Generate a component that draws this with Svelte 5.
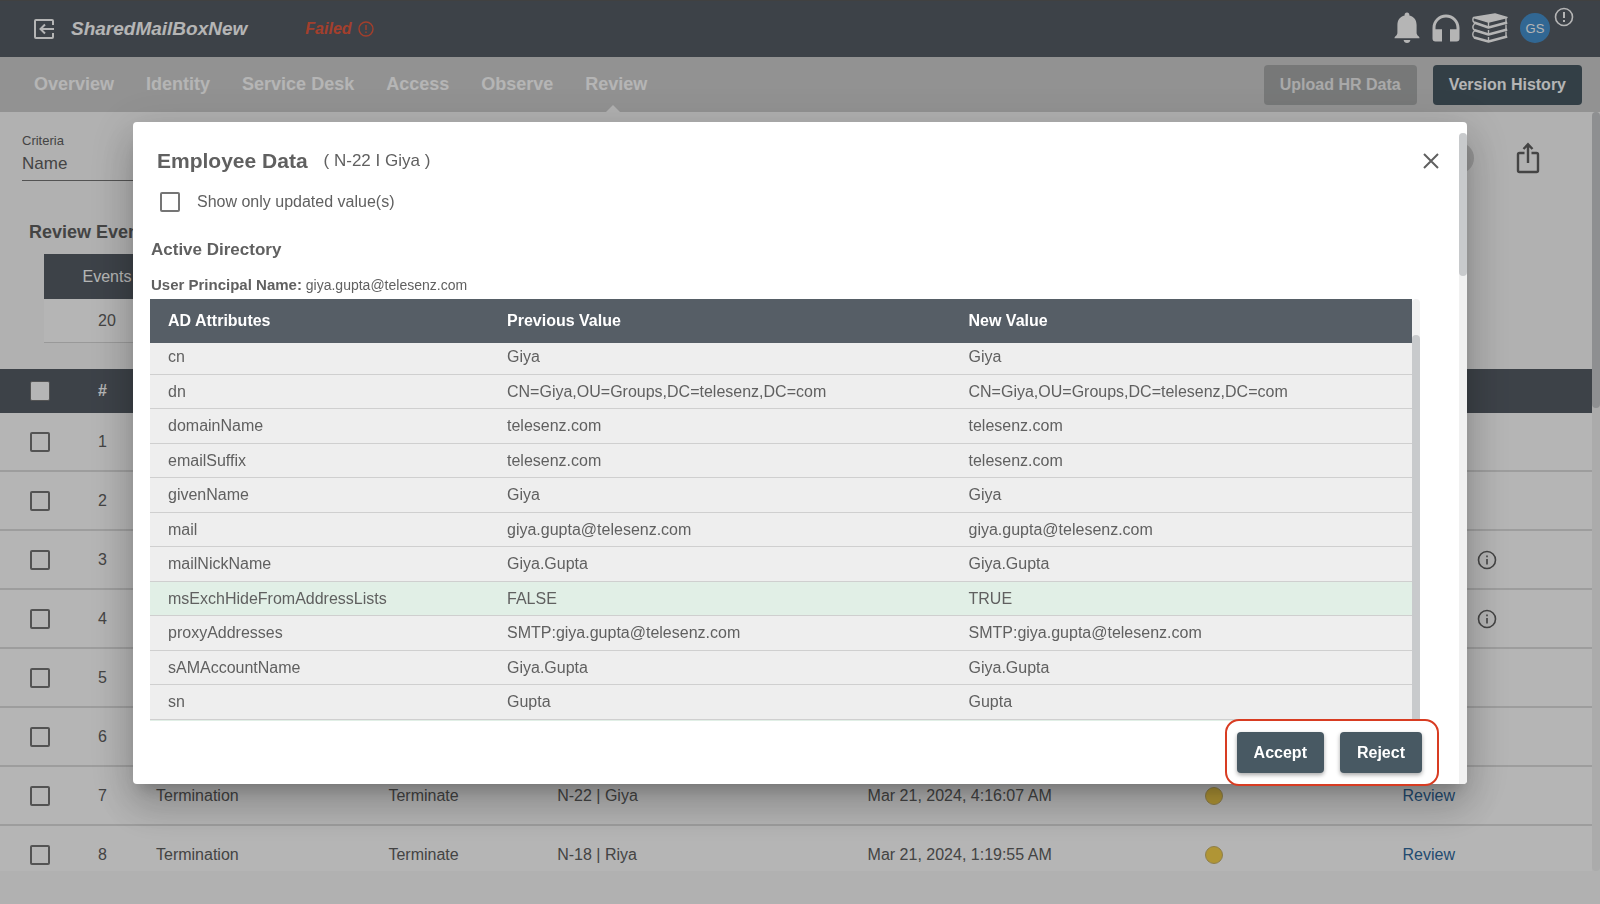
<script lang="ts">
	interface EventRow {
		id: number;
		event?: string;
		action?: string;
		employee?: string;
		date?: string;
		info?: boolean;
	}

	interface Attribute {
		name: string;
		previous: string;
		next: string;
	}

	const tabs = ['Overview', 'Identity', 'Service Desk', 'Access', 'Observe', 'Review'];
	let activeTab = $state('Review');
	let dialogOpen = $state(true);
	let onlyUpdated = $state(false);

	const events: EventRow[] = [
		{ id: 1 },
		{ id: 2 },
		{ id: 3, info: true },
		{ id: 4, info: true },
		{ id: 5 },
		{ id: 6 },
		{ id: 7, event: 'Termination', action: 'Terminate', employee: 'N-22 | Giya', date: 'Mar 21, 2024, 4:16:07 AM' },
		{ id: 8, event: 'Termination', action: 'Terminate', employee: 'N-18 | Riya', date: 'Mar 21, 2024, 1:19:55 AM' }
	];

	const dn = 'CN=Giya,OU=Groups,DC=telesenz,DC=com';
	const attributes: Attribute[] = [
		{ name: 'cn', previous: 'Giya', next: 'Giya' },
		{ name: 'dn', previous: dn, next: dn },
		{ name: 'domainName', previous: 'telesenz.com', next: 'telesenz.com' },
		{ name: 'emailSuffix', previous: 'telesenz.com', next: 'telesenz.com' },
		{ name: 'givenName', previous: 'Giya', next: 'Giya' },
		{ name: 'mail', previous: 'giya.gupta@telesenz.com', next: 'giya.gupta@telesenz.com' },
		{ name: 'mailNickName', previous: 'Giya.Gupta', next: 'Giya.Gupta' },
		{ name: 'msExchHideFromAddressLists', previous: 'FALSE', next: 'TRUE' },
		{ name: 'proxyAddresses', previous: 'SMTP:giya.gupta@telesenz.com', next: 'SMTP:giya.gupta@telesenz.com' },
		{ name: 'sAMAccountName', previous: 'Giya.Gupta', next: 'Giya.Gupta' },
		{ name: 'sn', previous: 'Gupta', next: 'Gupta' }
	];

	let visibleAttributes = $derived(
		onlyUpdated ? attributes.filter((a) => a.previous !== a.next) : attributes
	);
</script>

<div class="app">
	<header class="topbar">
		<button type="button" class="icon-btn" aria-label="Back">
			<svg width="22" height="22" viewBox="0 0 22 22" fill="none" stroke="currentColor" stroke-width="2">
				<path d="M20 7V3a1 1 0 0 0-1-1H3a1 1 0 0 0-1 1v16a1 1 0 0 0 1 1h16a1 1 0 0 0 1-1v-4" />
				<path d="M21 11H8M12 6.500L7.500 11l4.500 4.500" />
			</svg>
		</button>
		<h1>SharedMailBoxNew</h1>
		<span class="status">
			Failed
			<svg width="16" height="16" viewBox="0 0 16 16" fill="none" stroke="currentColor">
				<circle cx="8" cy="8" r="7" stroke-width="1.400" />
				<path d="M8 4v5M8 10.500v1.500" stroke-width="1.400" />
			</svg>
		</span>
		<div class="tools">
			<button type="button" class="icon-btn" aria-label="Notifications">
				<svg width="26" height="32" viewBox="0 0 26 32" fill="currentColor">
					<path d="M13 0.500c1.600 0 2.400 1 2.400 2.400v.7c4.600 1.100 7.200 4.600 7.200 9.400v7.400c0 1.700.7 2.700 1.700 3.600.7.600 1.200 1.200 1.200 2.200H.5c0-1 .5-1.600 1.200-2.200 1-.9 1.700-1.900 1.700-3.600V13c0-4.800 2.600-8.300 7.200-9.400v-.7c0-1.400.8-2.400 2.400-2.400z" />
					<path d="M9.600 28h6.800c-.3 1.900-1.600 3-3.400 3s-3.100-1.100-3.400-3z" />
				</svg>
			</button>
			<button type="button" class="icon-btn" aria-label="Support">
				<svg width="28" height="28" viewBox="0 0 28 28" fill="currentColor">
					<path d="M14 .5C6.500.5.500 6.500.500 14v10.500a3 3 0 0 0 3 3H10V15.300H3.500V14c0-6 4.600-10.500 10.500-10.500S24.500 8 24.500 14v1.300H18v12.200h6.500a3 3 0 0 0 3-3V14C27.500 6.500 21.500.5 14 .5z" />
				</svg>
			</button>
			<button type="button" class="icon-btn" aria-label="Documentation">
				<svg width="36" height="30" viewBox="0 0 36 30" fill="none" stroke="currentColor" stroke-width="1.400" stroke-linejoin="round">
					<path d="M1.500 4.500L23 1l12 3.500L16.500 9z" fill="currentColor" />
					<path d="M1.500 4.500C.7 6 .7 8 2 9.500M16.500 9v5M34 5v4M16.500 17v4M34 11.500v4.500M16.500 24v4M34 18.500V23" />
					<path d="M2.500 11C.8 12.500.5 15 2 17M2.500 18C.3 19.500.3 22.500 2 24.500" />
					<path d="M2 9.500L16.500 14.500 35.200 9.500M2 17l14.500 4.500L35.200 16.500M2 24.500l14.500 4L35.200 23.500" stroke-width="2.400" />
				</svg>
			</button>
			<button type="button" class="avatar">GS</button>
			<svg class="alert" width="20" height="20" viewBox="0 0 20 20" fill="none" stroke="currentColor">
				<circle cx="10" cy="10" r="8.500" stroke-width="1.600" />
				<path d="M10 5v6M10 13v2" stroke-width="2" />
			</svg>
		</div>
	</header>

	<nav class="tabbar">
		<ul>
			{#each tabs as tab}
				<li>
					<a
						href="#{tab.toLowerCase().replace(' ', '-')}"
						class:active={tab === activeTab}
						onclick={() => (activeTab = tab)}
					>{tab}</a>
				</li>
			{/each}
		</ul>
		<div class="tab-actions">
			<button type="button" class="btn" disabled>Upload HR Data</button>
			<button type="button" class="btn">Version History</button>
		</div>
	</nav>

	<main class="page">
		<div class="content">
			<div class="filters">
				<div class="field">
					<label for="criteria">Criteria</label>
					<select id="criteria">
						<option>Name</option>
					</select>
				</div>
				<div class="filter-actions">
					<button type="button" class="round" aria-label="Search"></button>
					<button type="button" class="icon-btn share" aria-label="Export">
						<svg width="24" height="32" viewBox="0 0 24 32" fill="none" stroke="currentColor" stroke-width="2.400">
							<path d="M8.500 11H3.500a1.500 1.500 0 0 0-1.500 1.500v16A1.500 1.500 0 0 0 3.500 30h17a1.500 1.500 0 0 0 1.500-1.500v-16a1.500 1.500 0 0 0-1.500-1.500h-5M12 21V3M7.500 7L12 2.300 16.500 7" />
						</svg>
					</button>
				</div>
			</div>

			<h2>Review Events</h2>
			<table class="counts">
				<thead>
					<tr><th>Events</th></tr>
				</thead>
				<tbody>
					<tr><td>20</td></tr>
				</tbody>
			</table>

			<table class="events">
				<colgroup>
					<col class="c-check" />
					<col class="c-num" />
					<col class="c-event" />
					<col class="c-action" />
					<col class="c-employee" />
					<col class="c-date" />
					<col class="c-status" />
					<col class="c-review" />
					<col />
				</colgroup>
				<thead>
					<tr>
						<th class="check"><input type="checkbox" aria-label="Select all" /></th>
						<th>#</th>
						<th colspan="7"></th>
					</tr>
				</thead>
				<tbody>
					{#each events as row (row.id)}
						<tr>
							<td class="check"><input type="checkbox" aria-label="Select row {row.id}" /></td>
							<td>{row.id}</td>
							<td>{row.event ?? ''}</td>
							<td>{row.action ?? ''}</td>
							<td>{row.employee ?? ''}</td>
							<td>{row.date ?? ''}</td>
							<td>{#if row.event}<span class="dot"></span>{/if}</td>
							<td>{#if row.event}<a href="#review-{row.id}">Review</a>{/if}</td>
							<td class="info">
								{#if row.info}
									<svg width="20" height="20" viewBox="0 0 20 20" fill="none" stroke="currentColor" stroke-width="1.600">
										<circle cx="10" cy="10" r="8.500" />
										<path d="M10 9v5.500M10 5.500v1.800" />
									</svg>
								{/if}
							</td>
						</tr>
					{/each}
				</tbody>
			</table>
		</div>
		<div class="scrollbar page-scroll"><div class="thumb"></div></div>
	</main>
</div>

{#if dialogOpen}
	<div class="scrim">
		<div class="dialog" role="dialog" aria-modal="true" aria-labelledby="dialog-title">
			<div class="dialog-body">
				<div class="dialog-head">
					<h2 id="dialog-title">Employee Data</h2>
					<span class="who">( N-22 I Giya )</span>
					<button type="button" class="icon-btn close" aria-label="Close" onclick={() => (dialogOpen = false)}>
						<svg width="16" height="16" viewBox="0 0 16 16" fill="none" stroke="currentColor" stroke-width="2">
							<path d="M1 1l14 14M15 1L1 15" />
						</svg>
					</button>
				</div>
				<label class="only-updated">
					<input type="checkbox" bind:checked={onlyUpdated} />
					Show only updated value(s)
				</label>
				<h3>Active Directory</h3>
				<p class="upn"><strong>User Principal Name:</strong> giya.gupta@telesenz.com</p>

				<div class="attr-area">
					<div class="attr-scroll">
						<table class="attrs">
							<thead>
								<tr>
									<th class="a-name">AD Attributes</th>
									<th>Previous Value</th>
									<th>New Value</th>
								</tr>
							</thead>
							<tbody>
								{#each visibleAttributes as attr (attr.name)}
									<tr class:updated={attr.previous !== attr.next}>
										<td>{attr.name}</td>
										<td>{attr.previous}</td>
										<td>{attr.next}</td>
									</tr>
								{/each}
								<tr class="updated"><td colspan="3"></td></tr>
							</tbody>
						</table>
					</div>
					<div class="scrollbar attr-bar"><div class="thumb"></div></div>
				</div>

				<div class="dialog-foot">
					<div class="decision">
						<button type="button" class="btn raised">Accept</button>
						<button type="button" class="btn raised">Reject</button>
					</div>
				</div>
			</div>
			<div class="scrollbar dialog-bar"><div class="thumb"></div></div>
		</div>
	</div>
{/if}

<style>
	:global(body) {
		margin: 0;
		background: #fafafa;
		font-family: 'Liberation Sans', Arial, Helvetica, sans-serif;
		font-size: 16px;
		color: #606060;
	}

	* {
		box-sizing: border-box;
	}

	.app {
		display: flex;
		flex-direction: column;
		height: 100vh;
		overflow: hidden;
	}

	h1,
	h2,
	h3,
	p {
		margin: 0;
	}

	button,
	select {
		font-family: inherit;
	}

	.icon-btn {
		display: flex;
		padding: 0;
		border: none;
		background: none;
		color: inherit;
		cursor: pointer;
	}

	.topbar {
		flex: none;
		display: flex;
		align-items: center;
		height: 57px;
		padding: 0 26px 0 33px;
		background: #565d66;
		border-top: 1px solid #5c5c5c;
		color: #fff;
	}

	h1 {
		margin-left: 16px;
		font-size: 19px;
		font-style: italic;
	}

	.status {
		display: flex;
		align-items: center;
		gap: 6px;
		margin-left: 58px;
		color: #e6593e;
		font-weight: bold;
		font-style: italic;
	}

	.tools {
		display: flex;
		align-items: center;
		gap: 12px;
		height: 100%;
		margin-left: auto;
		padding-bottom: 2px;
	}

	.tools .avatar {
		width: 30px;
		height: 30px;
		padding: 0;
		border: none;
		border-radius: 50%;
		background: #4692d0;
		color: #fff;
		font-size: 13px;
	}

	.alert {
		align-self: flex-start;
		margin: 6px 0 0 -8px;
	}

	.tabbar {
		flex: none;
		display: flex;
		align-items: center;
		justify-content: space-between;
		height: 55px;
		padding: 0 18px 0 34px;
		background: #cecece;
	}

	.tabbar ul {
		display: flex;
		gap: 32px;
		height: 100%;
		margin: 0;
		padding: 0;
		list-style: none;
	}

	.tabbar a {
		position: relative;
		display: flex;
		align-items: center;
		height: 100%;
		color: #fff;
		font-size: 18px;
		font-weight: bold;
		text-decoration: none;
	}

	.tabbar a.active::after {
		content: '';
		position: absolute;
		bottom: 0;
		left: 21px;
		border: 7px solid transparent;
		border-top: none;
		border-bottom-color: #fafafa;
	}

	.tab-actions {
		display: flex;
		gap: 16px;
	}

	.btn {
		height: 40px;
		padding: 0 16px;
		border: none;
		border-radius: 4px;
		background: #485963;
		color: #fff;
		font-size: 16px;
		font-weight: bold;
		cursor: pointer;
	}

	.btn:disabled {
		background: #a8aaaa;
		color: #eee;
		cursor: default;
	}

	.page {
		flex: 1;
		display: flex;
		min-height: 0;
		margin-bottom: 33px;
	}

	.content {
		flex: 1;
		min-width: 0;
		overflow: hidden;
	}

	.scrollbar {
		flex: none;
		width: 8px;
		border-radius: 4px;
		background: #f1f1f1;
	}

	.thumb {
		border-radius: 4px;
		background: #c8cacc;
	}

	.page-scroll .thumb {
		height: 39%;
	}

	.filters {
		display: flex;
		justify-content: space-between;
		padding: 20px 52px 0 22px;
	}

	.field {
		display: flex;
		flex-direction: column;
		width: 240px;
		border-bottom: 1px solid #757575;
	}

	.field label {
		font-size: 13px;
		line-height: 18px;
	}

	.field select {
		height: 30px;
		padding: 0 0 4px;
		border: none;
		background: none;
		color: inherit;
		font-size: 17px;
		appearance: none;
	}

	.filter-actions {
		display: flex;
		align-items: center;
		gap: 42px;
		margin-top: 2px;
	}

	.round {
		width: 32px;
		height: 32px;
		border: none;
		border-radius: 50%;
		background: #d4d4d4;
	}

	.content h2 {
		padding: 40px 0 0 29px;
		font-size: 18px;
		line-height: 22px;
	}

	table {
		border-collapse: separate;
		border-spacing: 0;
	}

	.counts {
		width: 126px;
		margin: 11px 0 26px 44px;
	}

	.counts th,
	.counts td {
		height: 44px;
		padding: 0;
		text-align: center;
	}

	.counts th {
		height: 45px;
		background: #565d66;
		color: #fff;
		font-weight: normal;
	}

	.counts td {
		background: #fff;
		border-bottom: 1px solid #d8d8d8;
	}

	.events {
		width: 100%;
		table-layout: fixed;
	}

	.c-check {
		width: 82px;
	}

	.c-num {
		width: 58px;
	}

	.c-event {
		width: 14.6%;
	}

	.c-action {
		width: 10.6%;
	}

	.c-employee {
		width: 19.5%;
	}

	.c-date {
		width: 21.2%;
	}

	.c-status {
		width: 12.4%;
	}

	.c-review {
		width: 5.2%;
	}

	.events th {
		height: 44px;
		padding: 0 16px;
		background: #565d66;
		color: #fff;
		text-align: left;
	}

	.events td {
		height: 59px;
		padding: 0 0 0 16px;
		background: #fff;
		border-bottom: 2px solid #dedede;
		white-space: nowrap;
	}

	.events .check {
		padding-left: 30px;
	}

	.events td a {
		color: #316a9e;
		text-decoration: none;
	}

	.events .info {
		padding-left: 8px;
	}

	input[type='checkbox'] {
		display: block;
		width: 20px;
		height: 20px;
		margin: 0;
		border: 2px solid #757575;
		border-radius: 2px;
		appearance: none;
	}

	input[type='checkbox']:checked {
		background: #485963;
	}

	.events th input[type='checkbox'] {
		border-width: 1px;
		background: #fff;
	}

	.dot {
		display: block;
		width: 18px;
		height: 18px;
		border: 1px solid #c9b36a;
		border-radius: 50%;
		background: #f8d24b;
	}

	svg {
		display: block;
	}

	.scrim {
		position: fixed;
		inset: 0;
		display: flex;
		padding: 122px 133px 120px;
		background: rgba(0, 0, 0, 0.29);
	}

	.dialog {
		flex: 1;
		display: flex;
		min-width: 0;
		border-radius: 4px;
		background: #fff;
		box-shadow:
			0 11px 15px -7px rgba(0, 0, 0, 0.2),
			0 24px 38px 3px rgba(0, 0, 0, 0.14),
			0 9px 46px 8px rgba(0, 0, 0, 0.12);
	}

	.dialog-body {
		flex: 1;
		display: flex;
		flex-direction: column;
		min-width: 0;
		padding: 26px 0 0 17px;
	}

	.dialog-head {
		display: flex;
		align-items: center;
		padding: 0 20px 0 7px;
		line-height: 26px;
	}

	.dialog-head h2 {
		font-size: 21px;
	}

	.who {
		margin-left: 16px;
		font-size: 17px;
	}

	.close {
		margin-left: auto;
	}

	.only-updated {
		display: flex;
		align-items: center;
		gap: 17px;
		padding: 17px 0 0 10px;
		line-height: 22px;
	}

	h3 {
		margin: 25px 0 0 1px;
		font-size: 17px;
		line-height: 24px;
	}

	.upn {
		padding: 13px 0 4px 1px;
		font-size: 14px;
		line-height: 19px;
	}

	.upn strong {
		font-size: 15px;
	}

	.attr-area {
		flex: 1;
		display: flex;
		min-height: 0;
		margin-right: 39px;
	}

	.attr-scroll {
		flex: 1;
		min-width: 0;
		overflow: hidden;
	}

	.attrs {
		width: 100%;
		table-layout: fixed;
	}

	.attrs .a-name {
		width: 339px;
	}

	.attrs th {
		height: 44px;
		padding: 0 18px;
		background: #565e66;
		color: #fff;
		text-align: left;
	}

	.attrs td {
		height: 34px;
		padding: 0 18px;
		background: #eee;
		border-bottom: 1px solid #cfcfcf;
	}

	/* Alternate heights average out to the list's row pitch */
	.attrs tr:nth-child(odd) td {
		height: 35px;
	}

	.attrs tbody tr:first-child td {
		height: 32px;
		padding-bottom: 3px;
	}

	.attrs .updated td {
		background: #e1efe6;
	}

	.attr-bar {
		padding-top: 36px;
	}

	.attr-bar .thumb {
		height: 100%;
		border-radius: 4px 4px 0 0;
	}

	.dialog-foot {
		flex: none;
		display: flex;
		justify-content: flex-end;
		padding-right: 20px;
	}

	.decision {
		position: relative;
		display: flex;
		gap: 16px;
		margin: -2px 0;
		padding: 11px 15px 11px 10px;
		border: 2px solid #d83c22;
		border-radius: 14px;
	}

	.decision .btn {
		height: 41px;
		padding: 0 17px;
	}

	.raised {
		box-shadow: 0 2px 4px rgba(0, 0, 0, 0.35);
	}

	.dialog-bar {
		margin-top: 11px;
		border-radius: 4px 4px 4px 0;
	}

	.dialog-bar .thumb {
		height: 22%;
	}
</style>
